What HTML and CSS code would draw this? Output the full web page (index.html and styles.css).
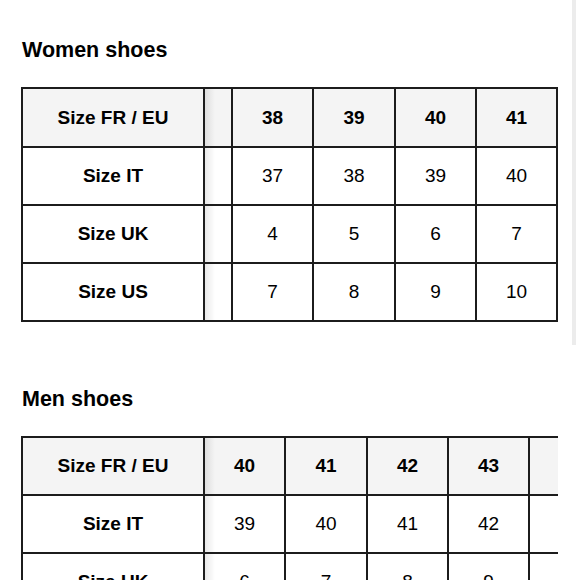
FILE: index.html
```html
<!DOCTYPE html>
<html lang="en">
<head>
<meta charset="utf-8">
<title>Shoe sizes</title>
<link rel="stylesheet" href="styles.css">
</head>
<body>
<div class="scrollbar"></div>
<section class="section women">
  <h2 class="title">Women shoes</h2>
  <div class="wrap">
    <table class="sizes">
      <colgroup>
        <col class="c-label"><col class="c-spacer"><col class="c-a"><col class="c-b"><col class="c-a"><col class="c-a">
      </colgroup>
      <tr class="head"><th>Size FR / EU</th><td class="shadow"></td><th>38</th><th>39</th><th>40</th><th>41</th></tr>
      <tr><th>Size IT</th><td class="shadow"></td><td>37</td><td>38</td><td>39</td><td>40</td></tr>
      <tr><th>Size UK</th><td class="shadow"></td><td>4</td><td>5</td><td>6</td><td>7</td></tr>
      <tr><th>Size US</th><td class="shadow"></td><td>7</td><td>8</td><td>9</td><td>10</td></tr>
    </table>
  </div>
</section>
<section class="section men">
  <h2 class="title">Men shoes</h2>
  <div class="wrap">
    <table class="sizes">
      <colgroup>
        <col class="c-label"><col class="c-a"><col class="c-b"><col class="c-a"><col class="c-a"><col class="c-a">
      </colgroup>
      <tr class="head"><th>Size FR / EU</th><th class="shadow">40</th><th>41</th><th>42</th><th>43</th><th></th></tr>
      <tr><th>Size IT</th><td class="shadow">39</td><td>40</td><td>41</td><td>42</td><td></td></tr>
      <tr><th>Size UK</th><td class="shadow">6</td><td>7</td><td>8</td><td>9</td><td></td></tr>
      <tr><th>Size US</th><td class="shadow">7</td><td>8</td><td>9</td><td>10</td><td></td></tr>
    </table>
  </div>
</section>
</body>
</html>
```
FILE: styles.css
```css
html, body {
  margin: 0;
  padding: 0;
  background: #fff;
}
body {
  font-family: "Liberation Sans", Arial, sans-serif;
  color: #000;
  padding: 38px 0 0 21px;
  position: relative;
  height: 580px;
  box-sizing: border-box;
  overflow: hidden;
}
.scrollbar {
  position: absolute;
  top: 0;
  left: 572px;
  width: 4px;
  height: 345px;
  background: #ececec;
}
.title {
  margin: 0 0 25px 1px;
  font-size: 21.5px;
  line-height: 24px;
  font-weight: bold;
}
.women .head th,
.women .head td {
  height: 59px;
}
.men {
  margin-top: 65px;
}
.wrap {
  width: 537px;
  overflow: hidden;
}
.sizes {
  border-collapse: separate;
  border-spacing: 0;
  table-layout: fixed;
  border-top: 2px solid #1c1c1c;
  border-left: 2px solid #1c1c1c;
  font-size: 19px;
  width: max-content;
}
.c-label { width: 182px; }
.c-spacer { width: 28px; }
.c-a { width: 81px; }
.c-b { width: 82px; }
.sizes th,
.sizes td {
  box-sizing: border-box;
  height: 58px;
  padding: 0;
  text-align: center;
  vertical-align: middle;
  border-right: 2px solid #1c1c1c;
  border-bottom: 2px solid #1c1c1c;
  background-color: #fff;
}
.sizes th {
  font-weight: bold;
}
.sizes td {
  font-weight: normal;
}
.sizes .head th,
.sizes .head td {
  background-color: #f4f4f4;
}
.sizes .shadow {
  background-image: linear-gradient(to right, rgba(0, 0, 0, 0.09), rgba(0, 0, 0, 0) 10px);
}
```
